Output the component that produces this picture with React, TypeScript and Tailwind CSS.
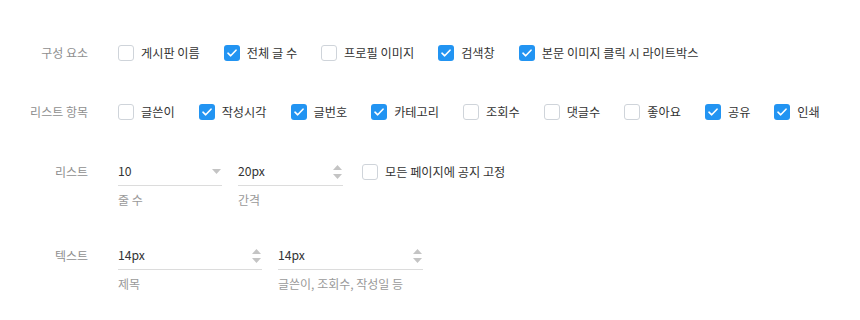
import { useState } from "react";

type CheckProps = { label: string; checked?: boolean };

const Check = ({ label, checked: initial = false }: CheckProps) => {
  const [checked, setChecked] = useState(initial);
  return (
    <label
      className="flex cursor-pointer items-center gap-[7px] text-[12.2px] text-[#333]"
      onClick={() => setChecked(!checked)}
    >
      <span
        className={
          checked
            ? "flex h-4 w-4 items-center justify-center rounded-[3px] bg-[#2294f2]"
            : "flex h-4 w-4 items-center justify-center rounded-[3px] border border-[#cfd4da] bg-white"
        }
      >
        {checked && (
          <svg width="10" height="8" viewBox="0 0 10 8" fill="none">
            <path
              d="M1 4.2L3.7 6.8L9 1.2"
              stroke="white"
              strokeWidth="1.6"
              strokeLinecap="round"
              strokeLinejoin="round"
            />
          </svg>
        )}
      </span>
      {label}
    </label>
  );
};

const Spinner = () => (
  <div className="flex flex-col items-center gap-[4px]">
    <svg width="9" height="5" viewBox="0 0 9 5">
      <path d="M4.5 0L9 5H0Z" fill="#c4c4c4" />
    </svg>
    <svg width="9" height="5" viewBox="0 0 9 5">
      <path d="M0 0H9L4.5 5Z" fill="#c4c4c4" />
    </svg>
  </div>
);

const Caret = () => (
  <svg width="9" height="5" viewBox="0 0 9 5">
    <path d="M0 0H9L4.5 5Z" fill="#c4c4c4" />
  </svg>
);

type FieldProps = {
  value: string;
  help: string;
  width: string;
  select?: boolean;
};

const Field = ({ value, help, width, select }: FieldProps) => (
  <div className={`flex flex-col ${width}`}>
    <div className="flex h-[28px] items-center justify-between border-b border-[#dcdcdc] pr-[1px]">
      <span className="text-[12.2px] text-[#333]">{value}</span>
      {select ? <Caret /> : <Spinner />}
    </div>
    <span className="mt-[5px] text-[12px] text-[#9a9a9a]">{help}</span>
  </div>
);

const Label = ({ children }: { children: string }) => (
  <div className="w-[88px] shrink-0 text-right text-[12px] text-[#8f8f8f]">
    {children}
  </div>
);

export default function App() {
  return (
    <div
      className="h-[320px] w-[860px] bg-white pt-[43px]"
      style={{ fontFamily: '"Noto Sans CJK KR", "Noto Sans", sans-serif' }}
    >
      <div className="flex h-5 items-center">
        <Label>구성 요소</Label>
        <div className="ml-[30px] flex items-center gap-[24px]">
          <Check label="게시판 이름" />
          <Check label="전체 글 수" checked />
          <Check label="프로필 이미지" />
          <Check label="검색창" checked />
          <Check label="본문 이미지 클릭 시 라이트박스" checked />
        </div>
      </div>

      <div className="mt-[39px] flex h-5 items-center">
        <Label>리스트 항목</Label>
        <div className="ml-[30px] flex items-center gap-[24px]">
          <Check label="글쓴이" />
          <Check label="작성시각" checked />
          <Check label="글번호" checked />
          <Check label="카테고리" checked />
          <Check label="조회수" />
          <Check label="댓글수" />
          <Check label="좋아요" />
          <Check label="공유" checked />
          <Check label="인쇄" checked />
        </div>
      </div>

      <div className="mt-[36px] flex items-start">
        <div className="flex h-[28px] items-center">
          <Label>리스트</Label>
        </div>
        <div className="ml-[30px] flex items-start gap-4">
          <Field value="10" help="줄 수" width="w-[104px]" select />
          <Field value="20px" help="간격" width="w-[105px]" />
          <div className="ml-[3px] flex h-[28px] items-center">
            <Check label="모든 페이지에 공지 고정" />
          </div>
        </div>
      </div>

      <div className="mt-[33px] flex items-start">
        <div className="flex h-[28px] items-center">
          <Label>텍스트</Label>
        </div>
        <div className="ml-[30px] flex items-start gap-4">
          <Field value="14px" help="제목" width="w-[144px]" />
          <Field value="14px" help="글쓴이, 조회수, 작성일 등" width="w-[145px]" />
        </div>
      </div>
    </div>
  );
}
